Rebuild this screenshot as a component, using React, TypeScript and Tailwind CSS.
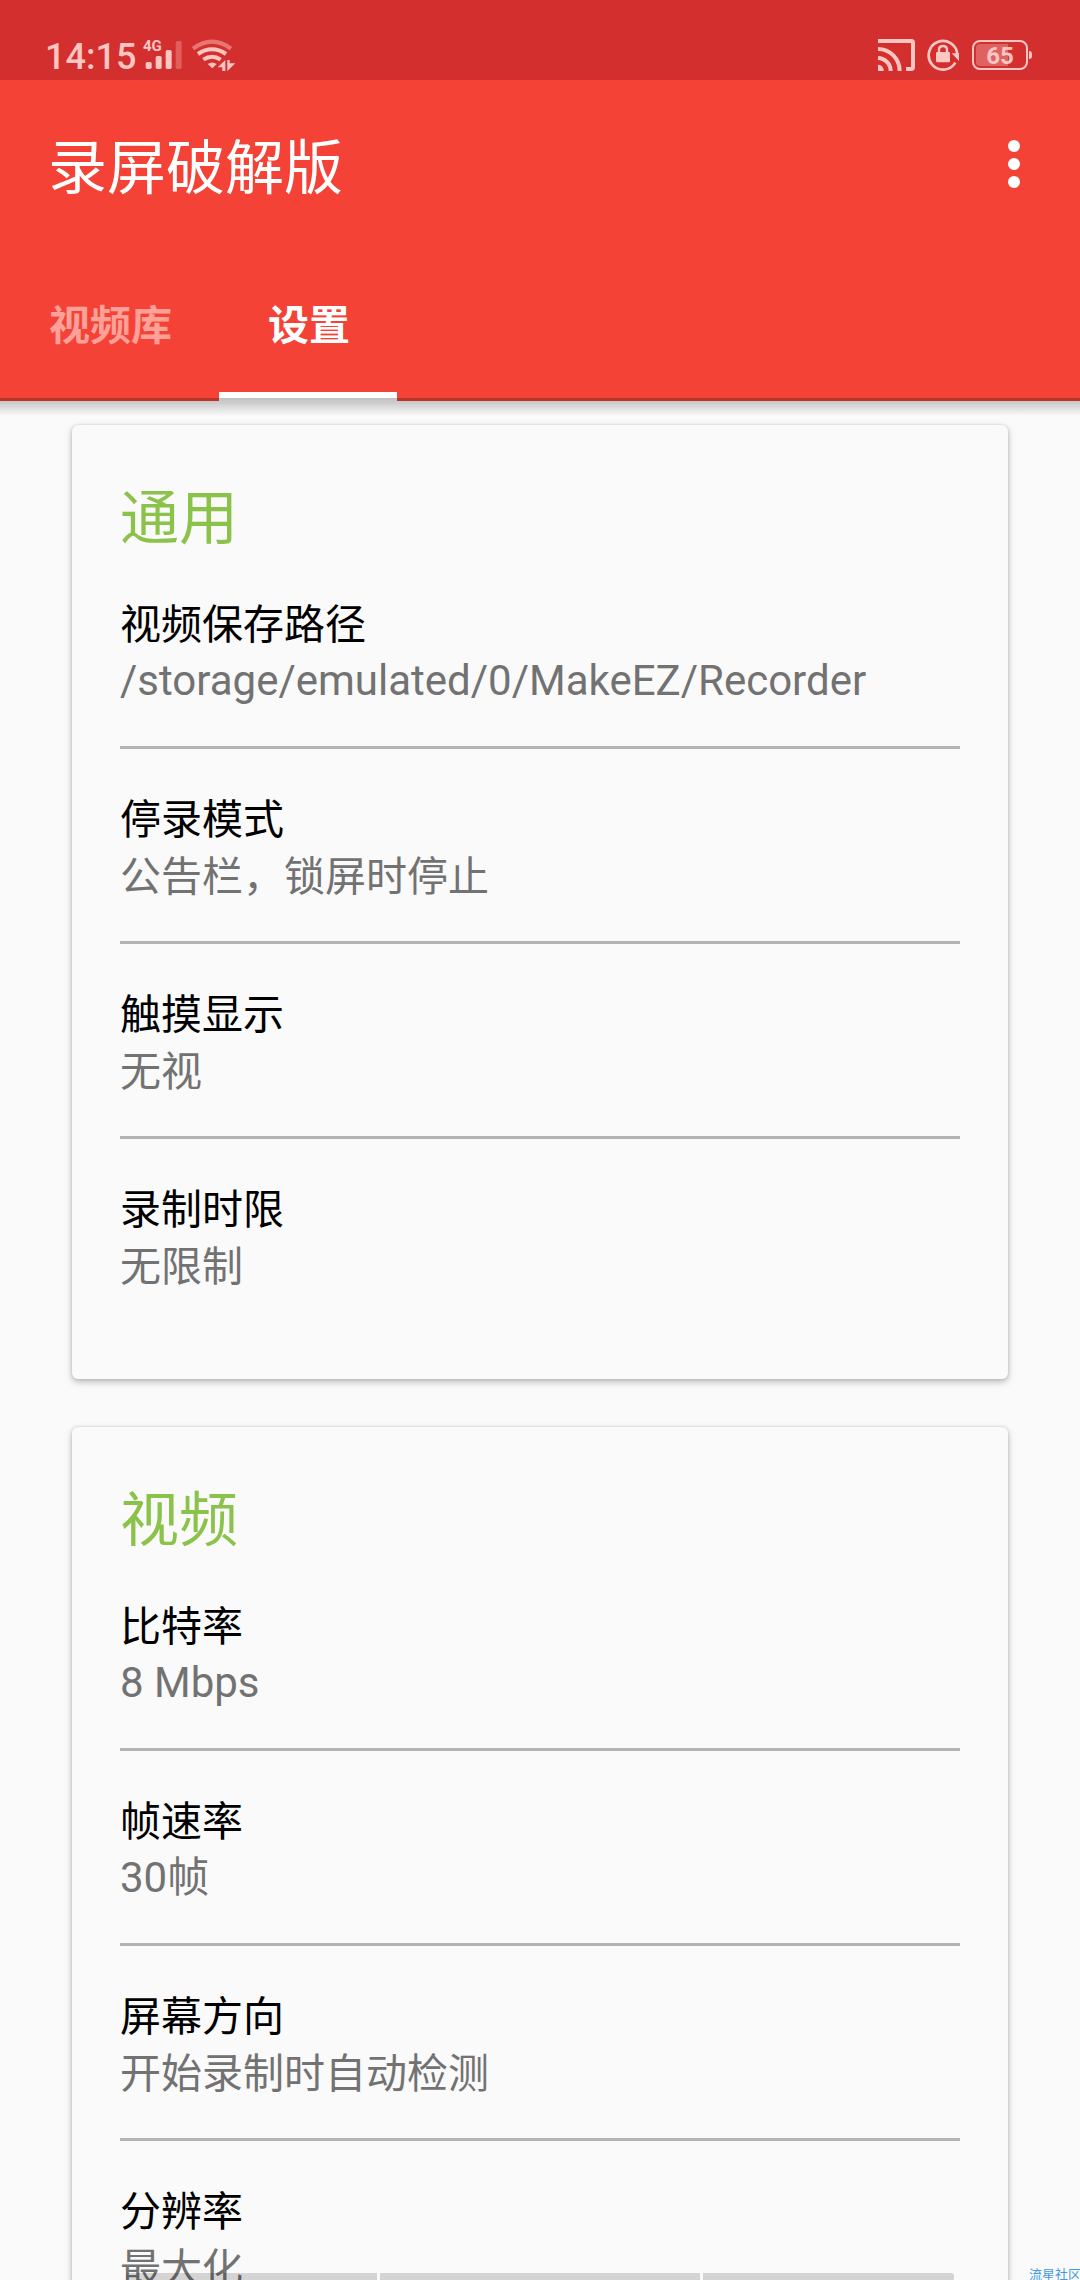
import React, { useState } from "react";

interface Setting {
  label: string;
  value: string;
  latin?: boolean;
}

interface Section {
  title: string;
  settings: Setting[];
}

const sections: Section[] = [
  {
    title: "通用",
    settings: [
      {
        label: "视频保存路径",
        value: "/storage/emulated/0/MakeEZ/Recorder",
        latin: true,
      },
      { label: "停录模式", value: "公告栏，锁屏时停止" },
      { label: "触摸显示", value: "无视" },
      { label: "录制时限", value: "无限制" },
    ],
  },
  {
    title: "视频",
    settings: [
      { label: "比特率", value: "8 Mbps", latin: true },
      { label: "帧速率", value: "30帧", latin: true },
      { label: "屏幕方向", value: "开始录制时自动检测" },
      { label: "分辨率", value: "最大化" },
    ],
  },
];

const tabs = ["视频库", "设置"];

const SignalIcon = () => (
  <svg width="40" height="32" viewBox="340 60 120 96" fill="#ffc6c2">
    <rect x="348" y="126" width="18" height="21" rx="5" />
    <rect x="378" y="108" width="18" height="39" rx="5" />
    <rect x="408" y="90" width="18" height="57" rx="5" />
    <rect x="438" y="63" width="18" height="84" rx="5" fill="#e35d5b" />
  </svg>
);

const WifiIcon = () => (
  <svg width="45" height="34" viewBox="483 54 135 102" fill="none">
    <path d="M489 86Q546 44 603 86" stroke="#e87572" strokeWidth="12" />
    <path d="M504 102Q546 74 588 102" stroke="#ffc6c2" strokeWidth="12" />
    <path d="M520 119Q546 101 572 119" stroke="#ffc6c2" strokeWidth="12" />
    <path d="M533 132Q546 123 560 132L547 145Z" fill="#ffc6c2" />
    <path d="M586 120V153H577V142H563ZM592 153V120H599V130H616Z" fill="#ffc6c2" />
  </svg>
);

const CastIcon = () => (
  <svg width="39" height="34" viewBox="51 54 117 102" fill="none" stroke="#ffc6c2">
    <path d="M54 63H154Q159 63 159 68V142Q159 147 154 147H138" strokeWidth="12" />
    <path d="M54 87A65 66 0 0 1 119 153M54 114A39 39 0 0 1 92 153" strokeWidth="12" />
    <path d="M54 134A16 18 0 0 1 71 153H54Z" fill="#ffc6c2" stroke="none" />
  </svg>
);

const RotationLockIcon = () => (
  <svg width="34" height="34" viewBox="198 54 102 102" fill="none" stroke="#ffc6c2">
    <path d="M292 103A43 43 0 1 0 286 128" strokeWidth="8" />
    <path d="M275 100H297V123Z" fill="#ffc6c2" stroke="none" />
    <path d="M237 98V89Q237 78 249 78Q261 78 261 89V98" strokeWidth="7" />
    <rect x="228" y="96" width="42" height="31" rx="4" fill="#ffc6c2" stroke="none" />
  </svg>
);

const StatusBar = () => {
  return (
    <div className="flex justify-between h-20 bg-[#d32f2f] text-[#ffc6c2]">
      <div className="flex pl-[45px]">
        <span className="w-[98px] pt-[36px] text-[36px] leading-[42px] font-medium font-['Roboto',sans-serif]">
          14:15
        </span>
        <div className="relative pt-10">
          <span className="absolute left-0 top-[38px] text-[15px] leading-[17px] font-bold font-['Roboto',sans-serif]">
            4G
          </span>
          <SignalIcon />
        </div>
        <div className="pt-[38px] pl-2">
          <WifiIcon />
        </div>
      </div>
      <div className="flex pr-12 pt-[38px]">
        <CastIcon />
        <div className="pl-[10px]">
          <RotationLockIcon />
        </div>
        <div className="flex pl-3 pt-[2px]">
          <div className="relative flex items-center justify-center w-[56px] h-[30px] border-2 border-[#ffc6c2] rounded-[8px]">
            <div className="absolute left-[2px] top-[2px] bottom-[2px] w-[32px] bg-[#e06260] rounded-l-[4px]" />
            <span className="relative pt-[2px] text-[24px] leading-[26px] font-bold font-['Roboto',sans-serif]">
              65
            </span>
          </div>
          <div className="mt-[11px] ml-px w-[3px] h-[8px] bg-[#ffc6c2] rounded-r-sm" />
        </div>
      </div>
    </div>
  );
};

const SettingRow = ({ label, value, latin }: Setting) => {
  return (
    <div className="h-48 pt-[42px] text-[41px]">
      <p className="leading-[58px] text-black">{label}</p>
      {latin ? (
        <p className="-mt-[2px] leading-[57px] text-[42px] text-[#727272]">
          {value}
        </p>
      ) : (
        <p className="leading-[57px] text-[#727272]">{value}</p>
      )}
    </div>
  );
};

const SettingCard = ({ title, settings }: Section) => {
  return (
    <section className="h-[954px] shrink-0 px-12 pt-12 pb-12 bg-[#fafafa] rounded-[6px] shadow-[0_3px_7px_rgba(0,0,0,0.26),0_0_3px_rgba(0,0,0,0.14)]">
      <h2 className="h-[81px] text-[59px] leading-[91px] text-[#8bc34a]">
        {title}
      </h2>
      {settings.map((item, index) => (
        <React.Fragment key={item.label}>
          {index > 0 && <div className="h-[3px] bg-[#b3b3b3]" />}
          <SettingRow {...item} />
        </React.Fragment>
      ))}
    </section>
  );
};

const App = () => {
  const [active, setActive] = useState<number>(1);

  return (
    <div className="relative flex flex-col w-[1080px] h-[2280px] overflow-hidden bg-[#fafafa] font-['Roboto','Noto_Sans_CJK_SC',sans-serif]">
      <header className="relative shrink-0 h-[401px] bg-[#f44336] text-white">
        <StatusBar />
        <div className="flex justify-between h-[168px] pl-12 pr-[60px]">
          <h1 className="pt-[46px] text-[59px] leading-[86px]">录屏破解版</h1>
          <div className="flex flex-col gap-[6px] pt-[60px]">
            <span className="rounded-full size-3 bg-white" />
            <span className="rounded-full size-3 bg-white" />
            <span className="rounded-full size-3 bg-white" />
          </div>
        </div>
        <nav className="flex h-[153px]">
          {tabs.map((tab, index) => (
            <button
              key={tab}
              onClick={() => setActive(index)}
              className={
                index === active
                  ? "pl-[49px] pr-[47px] pt-[14px] text-[41px] font-bold border-b-[9px] border-white"
                  : "pl-[49px] pr-[47px] pt-[14px] text-[41px] font-bold border-b-[9px] border-transparent text-[#ffa199]"
              }
            >
              {tab}
            </button>
          ))}
        </nav>
        {/* toolbar shadow starts just inside the bar */}
        <div className="absolute inset-x-0 z-10 h-[18px] -bottom-[15px] bg-linear-to-b from-black/25 to-transparent" />
      </header>
      <main className="flex flex-col gap-12 px-[72px] pt-6">
        {sections.map((section) => (
          <SettingCard key={section.title} {...section} />
        ))}
      </main>
      <div className="absolute left-[126px] top-[2273px] flex gap-[3px] w-[828px] h-[8px] rounded-[3px] overflow-hidden">
        <div className="w-[251px] bg-black/15" />
        <div className="w-[320px] bg-black/15" />
        <div className="w-[251px] bg-black/15" />
      </div>
      <span className="absolute left-[1029px] top-[2265px] whitespace-nowrap text-[13px] leading-[19px] text-[#4499e0]">
        流星社区
      </span>
    </div>
  );
};

export default App;
